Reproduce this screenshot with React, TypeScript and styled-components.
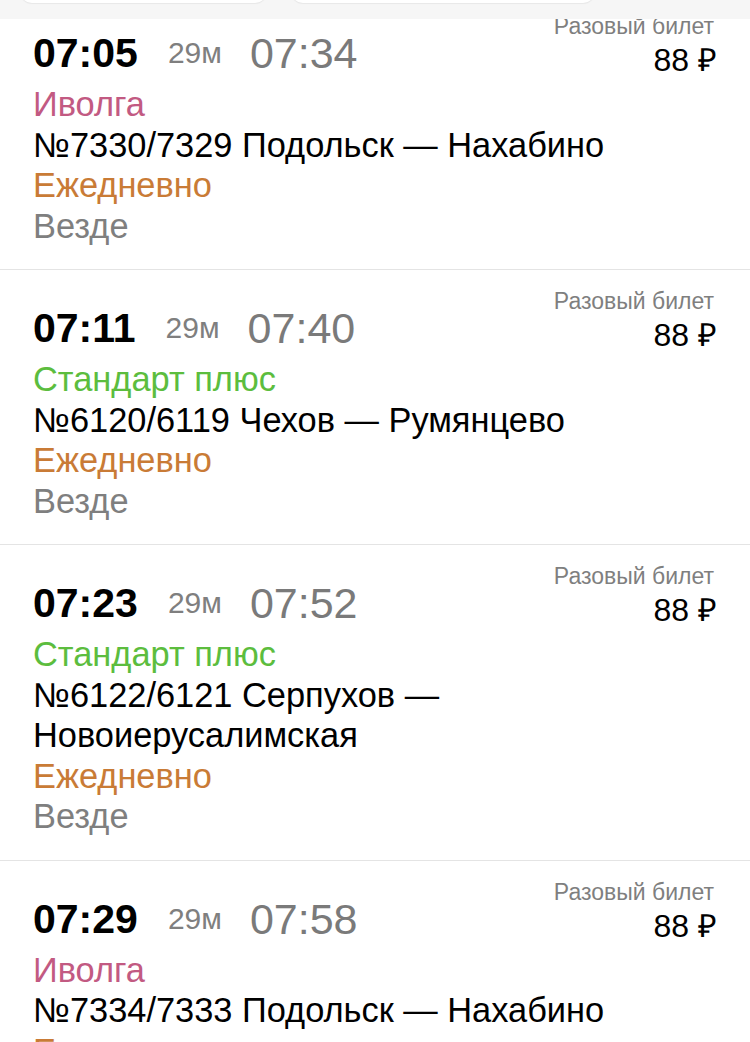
import React from "react";
import styled, { createGlobalStyle } from "styled-components";

const GlobalStyle = createGlobalStyle`
  html, body {
    margin: 0;
    padding: 0;
    background: #ffffff;
  }
  body {
    font-family: "Liberation Sans", Arial, sans-serif;
    -webkit-font-smoothing: antialiased;
  }
`;

type Tone = "pink" | "green" | "orange" | "gray" | "black";

const toneColors: Record<Tone, string> = {
  pink: "#c25a82",
  green: "#5cbd3e",
  orange: "#c97b36",
  gray: "#7f7f7f",
  black: "#000000",
};

interface Train {
  dep: string;
  dur: string;
  arr: string;
  kind: string;
  kindTone: Tone;
  route: string;
}

const trains: Train[] = [
  { dep: "07:05", dur: "29м", arr: "07:34", kind: "Иволга", kindTone: "pink", route: "№7330/7329 Подольск — Нахабино" },
  { dep: "07:11", dur: "29м", arr: "07:40", kind: "Стандарт плюс", kindTone: "green", route: "№6120/6119 Чехов — Румянцево" },
  { dep: "07:23", dur: "29м", arr: "07:52", kind: "Стандарт плюс", kindTone: "green", route: "№6122/6121 Серпухов — Новоиерусалимская" },
  { dep: "07:29", dur: "29м", arr: "07:58", kind: "Иволга", kindTone: "pink", route: "№7334/7333 Подольск — Нахабино" },
];

const Screen = styled.div`
  position: relative;
  width: 750px;
  height: 1042px;
  overflow: hidden;
  background: #ffffff;
`;

const TopBar = styled.div`
  position: absolute;
  top: 0;
  left: 0;
  right: 0;
  height: 19px;
  background: #f6f6f6;
  z-index: 2;
  display: flex;
  align-items: flex-end;
  gap: 24px;
  padding: 0 20px;
  box-sizing: border-box;
`;

const Pill = styled.div<{ $w: number }>`
  width: ${(p) => p.$w}px;
  height: 30px;
  margin-bottom: 16px;
  background: #ffffff;
  border-radius: 12px;
  box-shadow: 0 1px 1px rgba(0, 0, 0, 0.06);
  flex-shrink: 0;
`;

const List = styled.div`
  margin-top: -5px;
`;

const Row = styled.div`
  padding: 17px 33px 23px;
  border-bottom: 1px solid #e4e4e4;
`;

const RowHead = styled.div`
  display: flex;
  justify-content: space-between;
  align-items: flex-end;
`;

const Times = styled.div`
  display: flex;
  align-items: center;
  height: 52px;
`;

const Dep = styled.span`
  font-size: 41px;
  font-weight: 700;
  color: #000000;
  line-height: 52px;
`;

const Dur = styled.span`
  font-size: 30px;
  color: #7f7f7f;
  line-height: 52px;
  margin: 0 28px 0 30px;
`;

const Arr = styled.span`
  font-size: 43px;
  color: #7a7a7a;
  line-height: 52px;
`;

const Price = styled.div`
  display: flex;
  flex-direction: column;
  align-items: flex-end;
`;

const PriceLabel = styled.span`
  font-size: 23px;
  line-height: 29px;
  color: #7f7f7f;
  margin-right: 3px;
`;

const PriceValue = styled.span`
  font-size: 32px;
  line-height: 38px;
  color: #000000;
`;

const Details = styled.div`
  margin-top: 5px;
`;

const Line = styled.div<{ $tone: Tone }>`
  font-size: 34.4px;
  line-height: 40.5px;
  color: ${(p) => toneColors[p.$tone]};
`;

export default function App() {
  return (
    <>
      <GlobalStyle />
      <Screen>
        <TopBar>
          <Pill $w={247} />
          <Pill $w={304} />
        </TopBar>
        <List>
          {trains.map((t) => (
            <Row key={t.dep}>
              <RowHead>
                <Times>
                  <Dep>{t.dep}</Dep>
                  <Dur>{t.dur}</Dur>
                  <Arr>{t.arr}</Arr>
                </Times>
                <Price>
                  <PriceLabel>Разовый билет</PriceLabel>
                  <PriceValue>88 ₽</PriceValue>
                </Price>
              </RowHead>
              <Details>
                <Line $tone={t.kindTone}>{t.kind}</Line>
                <Line $tone="black">{t.route}</Line>
                <Line $tone="orange">Ежедневно</Line>
                <Line $tone="gray">Везде</Line>
              </Details>
            </Row>
          ))}
        </List>
      </Screen>
    </>
  );
}
